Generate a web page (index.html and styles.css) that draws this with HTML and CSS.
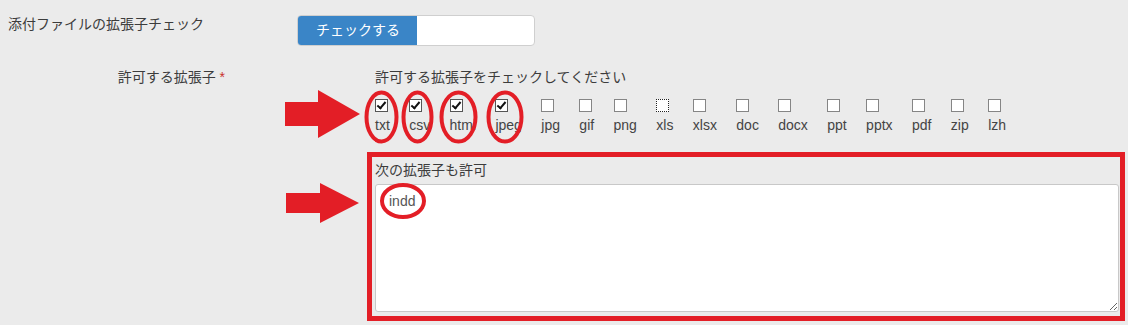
FILE: index.html
```html
<!DOCTYPE html>
<html lang="ja">
<head>
    <meta charset="UTF-8">
    <title>添付ファイルの拡張子チェック</title>
    <link rel="stylesheet" href="styles.css">
</head>
<body>
    <div class="form">
        <div class="row row-check">
            <div class="label">添付ファイルの拡張子チェック</div>
            <div class="switch">
                <span class="switch-on">チェックする</span>
                <span class="switch-off"></span>
            </div>
        </div>

        <div class="row row-ext">
            <div class="label label-right">許可する拡張子 <span class="req">*</span></div>
            <div class="field">
                <p class="hint">許可する拡張子をチェックしてください</p>
                <div class="ext-list">
                    <label class="ext"><input type="checkbox" checked><span>txt</span></label>
                    <label class="ext"><input type="checkbox" checked><span>csv</span></label>
                    <label class="ext"><input type="checkbox" checked><span>html</span></label>
                    <label class="ext"><input type="checkbox" checked><span>jpeg</span></label>
                    <label class="ext"><input type="checkbox"><span>jpg</span></label>
                    <label class="ext"><input type="checkbox"><span>gif</span></label>
                    <label class="ext"><input type="checkbox"><span>png</span></label>
                    <label class="ext"><input type="checkbox" class="focused"><span>xls</span></label>
                    <label class="ext"><input type="checkbox"><span>xlsx</span></label>
                    <label class="ext"><input type="checkbox"><span>doc</span></label>
                    <label class="ext"><input type="checkbox"><span>docx</span></label>
                    <label class="ext"><input type="checkbox"><span>ppt</span></label>
                    <label class="ext"><input type="checkbox"><span>pptx</span></label>
                    <label class="ext"><input type="checkbox"><span>pdf</span></label>
                    <label class="ext"><input type="checkbox"><span>zip</span></label>
                    <label class="ext"><input type="checkbox"><span>lzh</span></label>
                </div>
                <p class="hint hint-more">次の拡張子も許可</p>
                <textarea class="ext-more">indd</textarea>
            </div>
        </div>
    </div>

    <!-- 赤い注釈 -->
    <svg class="marks" width="1128" height="325" viewBox="0 0 1128 325">
        <g fill="#e31e26">
            <path d="M285 102 H318 V90 L360 114 L318 138 V126 H285 Z"/>
            <path d="M286 193 H320 V183 L359 203 L320 223 V213 H286 Z"/>
        </g>
        <g fill="none" stroke="#e31e26" stroke-width="4">
            <ellipse cx="381.5" cy="117" rx="15" ry="24.5"/>
            <ellipse cx="417.5" cy="117" rx="14" ry="24.5"/>
            <ellipse cx="458.5" cy="117" rx="17" ry="24.5"/>
            <ellipse cx="505" cy="117" rx="16.5" ry="24.5"/>
            <ellipse cx="403" cy="201" rx="21" ry="16"/>
        </g>
        <rect x="369.5" y="154.5" width="753" height="164" fill="none" stroke="#e31e26" stroke-width="5"/>
    </svg>
</body>
</html>
```

FILE: styles.css
```css
body {
    margin: 0;
    background: #ebebeb;
    font-family: "Liberation Sans", "Noto Sans CJK JP", sans-serif;
    font-size: 14px;
    line-height: 20px;
    color: #3c3c3c;
}
.form {
    padding: 14px 0 0 8px;
}
.row {
    display: flex;
}
.row-check .label {
    width: 289px;
}
.switch {
    margin-top: 1px;
    width: 238px;
    height: 31px;
    box-sizing: border-box;
    border: 1px solid #cfcfcf;
    border-radius: 4px;
    background: #fff;
    display: flex;
    overflow: hidden;
}
.switch-on {
    width: 119px;
    box-sizing: border-box;
    padding-left: 18px;
    background: #3a85c7;
    color: #fff;
    line-height: 29px;
}
.row-ext {
    margin-top: 21px;
}
.label-right {
    width: 217px;
    text-align: right;
}
.req {
    color: #c9302c;
}
.field {
    margin-left: 150px;
}
.hint {
    margin: 0;
}
.ext-list {
    display: flex;
    gap: 19.4px;
    margin-top: 12px;
}
.ext {
    display: flex;
    flex-direction: column;
    align-items: flex-start;
    color: #444;
}
.ext input {
    appearance: none;
    -webkit-appearance: none;
    position: relative;
    width: 13px;
    height: 13px;
    margin: 0 0 3px;
    box-sizing: border-box;
    border: 1px solid #858585;
    background: #fff;
}
.ext input:checked {
    border-color: #555;
}
.ext input:checked::after {
    content: "";
    position: absolute;
    left: 3px;
    top: 0;
    width: 3px;
    height: 7px;
    border-right: 2px solid #111;
    border-bottom: 2px solid #111;
    transform: rotate(40deg);
}
.ext input.focused {
    border: 1px dotted #222;
}
.hint-more {
    margin-top: 25px;
}
.ext-more {
    display: block;
    margin-top: 4px;
    width: 744px;
    height: 128px;
    box-sizing: border-box;
    padding: 6px 13px;
    border: 1px solid #c8c8c8;
    border-radius: 3px;
    background: #fff;
    font-family: "Liberation Sans", sans-serif;
    font-size: 14px;
    line-height: 20px;
    color: #555;
}
.marks {
    position: absolute;
    top: 0;
    left: 0;
    pointer-events: none;
}
```
